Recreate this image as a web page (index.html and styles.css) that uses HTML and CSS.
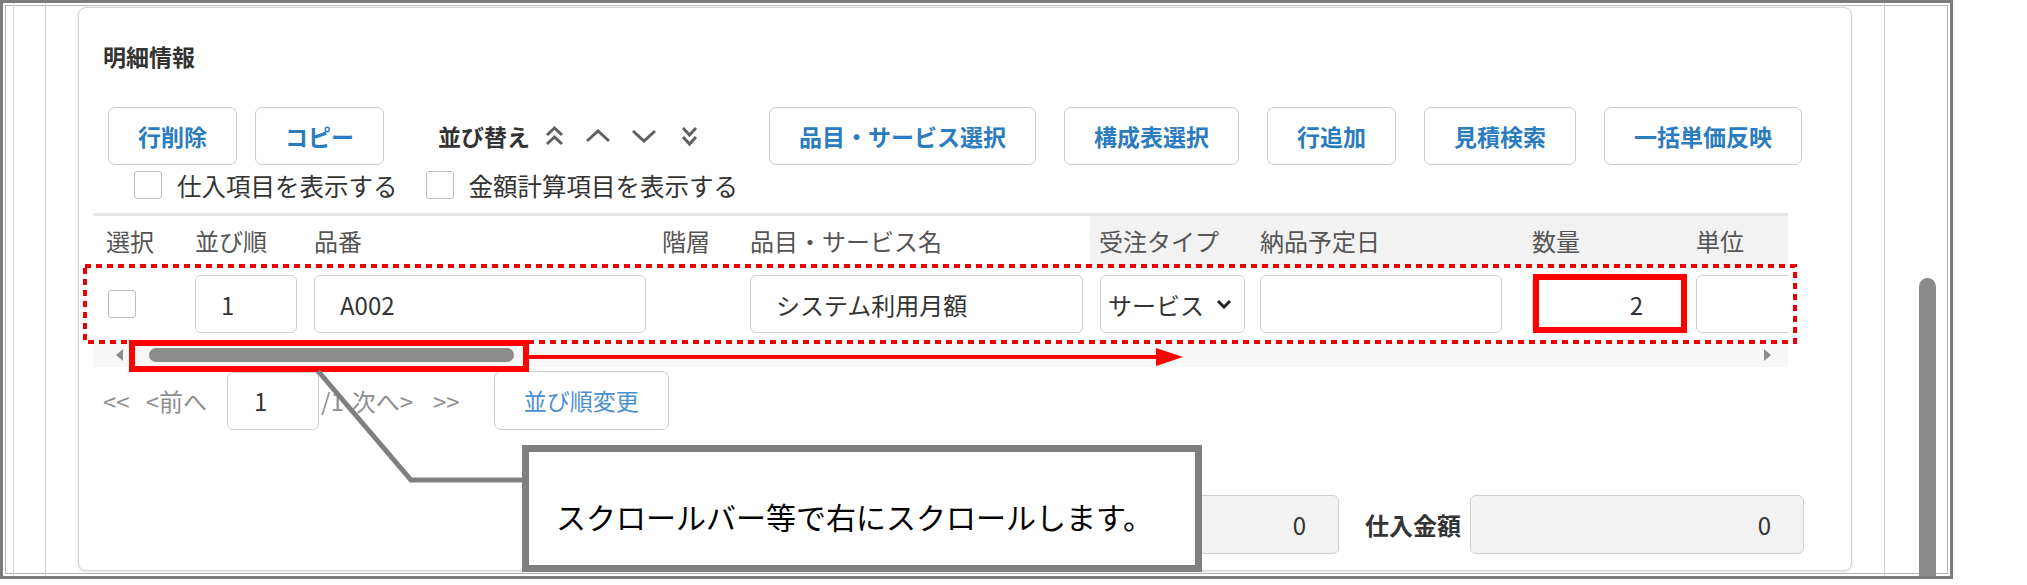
FILE: index.html
```html
<!DOCTYPE html>
<html lang="ja">
<head>
    <meta charset="UTF-8">
    <title>明細情報</title>
    <link rel="stylesheet" href="styles.css">
</head>
<body>
    <div class="frame">
        <div class="gutter"></div>

        <div class="main">
            <section class="card">
                <h2 class="card-title">明細情報</h2>

                <!-- toolbar -->
                <div class="toolbar">
                    <button type="button" class="btn btn-first">行削除</button>
                    <button type="button" class="btn">コピー</button>
                    <div class="sort">
                        <span class="sort-label">並び替え</span>
                        <svg class="ic-top" width="19" height="22" viewBox="0 0 19 22"><polyline points="2,10 9.5,3 17,10"/><polyline points="2,19 9.5,12 17,19"/></svg>
                        <svg class="ic-up" width="26" height="14" viewBox="0 0 26 14"><polyline points="2,12 13,2 24,12"/></svg>
                        <svg class="ic-down" width="26" height="14" viewBox="0 0 26 14"><polyline points="2,2 13,12 24,2"/></svg>
                        <svg class="ic-bottom" width="17" height="22" viewBox="0 0 17 22"><polyline points="2,3 8.5,10 15,3"/><polyline points="2,12 8.5,19 15,12"/></svg>
                    </div>
                    <button type="button" class="btn">品目・サービス選択</button>
                    <button type="button" class="btn">構成表選択</button>
                    <button type="button" class="btn">行追加</button>
                    <button type="button" class="btn">見積検索</button>
                    <button type="button" class="btn">一括単価反映</button>
                </div>

                <div class="toggles">
                    <label class="check"><span class="box"></span>仕入項目を表示する</label>
                    <label class="check"><span class="box"></span>金額計算項目を表示する</label>
                </div>

                <!-- detail lines -->
                <div class="grid-wrap">
                    <div class="grid">
                        <div class="th th-sel">選択</div>
                        <div class="th">並び順</div>
                        <div class="th">品番</div>
                        <div class="th">階層</div>
                        <div class="th">品目・サービス名</div>
                        <div class="th shade th-type">受注タイプ</div>
                        <div class="th shade">納品予定日</div>
                        <div class="th shade">数量</div>
                        <div class="th shade">単位</div>

                        <div class="td td-sel"><span class="box"></span></div>
                        <div class="td"><input class="field w-order" type="text" value="1"></div>
                        <div class="td"><input class="field w-code" type="text" value="A002"></div>
                        <div class="td"></div>
                        <div class="td"><input class="field w-name" type="text" value="システム利用月額"></div>
                        <div class="td td-type">
                            <div class="field select">
                                <span>サービス</span>
                                <svg width="16" height="10" viewBox="0 0 16 10"><polyline points="2,2 8,8 14,2"/></svg>
                            </div>
                        </div>
                        <div class="td"><input class="field w-date" type="text" value=""></div>
                        <div class="td"><input class="field w-qty num" type="text" value="2"></div>
                        <div class="td"><input class="field w-unit" type="text" value=""></div>
                    </div>
                    <div class="hscroll">
                        <span class="arrow-left"></span>
                        <span class="hthumb"></span>
                        <span class="arrow-right"></span>
                    </div>
                </div>

                <div class="pager">
                    <span class="pg-first">&lt;&lt;</span>
                    <span class="pg-prev">&lt;前へ</span>
                    <input class="field w-page" type="text" value="1">
                    <span class="pg-total">/1</span>
                    <span class="pg-next">次へ&gt;</span>
                    <span class="pg-last">&gt;&gt;</span>
                    <button type="button" class="btn btn-light">並び順変更</button>
                </div>

                <div class="totals">
                    <input class="total" type="text" value="0">
                    <span class="total-label">仕入金額</span>
                    <input class="total" type="text" value="0">
                </div>
            </section>
        </div>

        <div class="vscroll"><div class="vthumb"></div></div>

        <!-- annotations -->
        <svg class="marks" width="1956" height="582" viewBox="0 0 1956 582">
            <rect class="dotted" x="85" y="266" width="1710" height="76"/>
            <rect class="solid" x="1536" y="277" width="148" height="53"/>
            <rect class="solid" x="132" y="343" width="394" height="26"/>
            <line class="arrow-line" x1="529" y1="357" x2="1160" y2="357"/>
            <polygon class="arrow-head" points="1156,348 1183,357 1156,366"/>
            <polyline class="leader" points="318,371 411,480 524,480"/>
        </svg>
        <div class="callout">スクロールバー等で右にスクロールします。</div>
    </div>
</body>
</html>
```

FILE: styles.css
```css
* {
    box-sizing: border-box;
}
body {
    margin: 0;
    background: #fff;
    font-family: "Noto Sans CJK JP", "Noto Sans", sans-serif;
    color: #333;
}
.frame {
    position: relative;
    display: flex;
    width: 1953px;
    height: 579px;
    border: 3px solid #7c7c7c;
    box-shadow: inset 0 0 0 2px #fff, inset 0 0 0 3px #b4b4b4;
    overflow: hidden;
}
.gutter {
    flex: none;
    width: 33px;
    margin-left: 10px;
    border-left: 1px solid #d6d6d6;
    border-right: 1px solid #cfcfcf;
}
.main {
    flex: 1;
    padding: 4px 32px 0 32px;
}
.vscroll {
    flex: none;
    width: 66px;
    border-left: 1px solid #cfcfcf;
}
.vthumb {
    margin: 275px 0 0 34px;
    width: 17px;
    height: 320px;
    background: #8a8a8a;
    border-radius: 9px 9px 0 0;
}

/* card */
.card {
    height: 564px;
    padding: 31px 47px 16px 14px;
    border: 1px solid #d2d2d2;
    border-radius: 8px;
    box-shadow: 0 1px 3px rgba(0, 0, 0, 0.12);
    background: #fff;
}
.card-title {
    margin: 0 0 0 10px;
    font-size: 23px;
    line-height: 34px;
    font-weight: 700;
    color: #333;
}

/* toolbar */
.toolbar {
    display: flex;
    align-items: center;
    gap: 28px;
    height: 58px;
    margin: 34px 0 0 15px;
}
.btn {
    height: 58px;
    padding: 0 29px;
    border: 1px solid #cbcbcb;
    border-radius: 7px;
    background: #fff;
    color: #2b7bbf;
    font-family: inherit;
    font-size: 23px;
    font-weight: 700;
    line-height: 1;
    white-space: nowrap;
}
.btn-first {
    margin-right: -10px;
}
.btn-light {
    height: 59px;
    margin-left: 34px;
    font-weight: 400;
    color: #4a90d0;
}
.sort {
    display: flex;
    align-items: center;
    margin: 0 43px 0 26px;
}
.sort-label {
    font-size: 23px;
    font-weight: 700;
    color: #333;
}
.sort svg {
    fill: none;
    stroke: #5f5f5f;
    stroke-width: 3;
}
.ic-top {
    margin-left: 15px;
}
.ic-up {
    margin-left: 21px;
}
.ic-down {
    margin-left: 20px;
}
.ic-bottom {
    margin-left: 24px;
}

/* toggles */
.toggles {
    display: flex;
    align-items: center;
    height: 38px;
    margin: 1px 0 0 41px;
    font-size: 24.5px;
    color: #333;
}
.check {
    display: flex;
    align-items: center;
    gap: 15px;
    margin-right: 28px;
}
.box {
    display: inline-block;
    width: 28px;
    height: 28px;
    border: 1px solid #bdbdbd;
    border-radius: 3px;
    background: #fff;
}

/* grid */
.grid-wrap {
    width: 1695px;
    margin-top: 9px;
    border-top: 3px solid #e4e4e4;
    overflow: hidden;
}
.grid {
    display: grid;
    grid-template-columns: 100px 119px 348px 88px 342px 168px 272px 164px 200px;
    grid-template-rows: 49px 78px;
    width: 1801px;
}
.th {
    display: flex;
    align-items: center;
    padding-left: 2px;
    font-size: 24px;
    color: #555;
    white-space: nowrap;
}
.th-sel {
    padding-left: 13px;
}
.th-type {
    padding-left: 9px;
}
.shade {
    background: #f2f2f2;
}
.td {
    display: flex;
    align-items: center;
    padding-left: 2px;
}
.td-sel {
    padding-left: 15px;
}
.td-type {
    padding-left: 10px;
}
.field {
    height: 58px;
    padding: 0 0 0 25px;
    border: 1px solid #cfcfcf;
    border-radius: 6px;
    background: #fff;
    font-family: inherit;
    font-size: 24px;
    color: #333;
    outline: none;
}
.w-order { width: 102px; }
.w-code { width: 332px; }
.w-name { width: 333px; }
.w-date { width: 242px; }
.w-qty { width: 150px; }
.w-unit { width: 150px; }
.w-page {
    width: 92px;
    height: 58px;
    margin-left: 20px;
    padding-left: 26px;
}
.num {
    text-align: right;
    padding-right: 38px;
}
.select {
    display: flex;
    align-items: center;
    width: 145px;
    padding-left: 7px;
    color: #333;
}
.select svg {
    margin-left: 12px;
    fill: none;
    stroke: #222;
    stroke-width: 3;
}

/* horizontal scrollbar */
.hscroll {
    display: flex;
    align-items: center;
    height: 24px;
    padding: 0 17px 0 23px;
    background: #f7f7f7;
}
.arrow-left {
    width: 0;
    height: 0;
    border-top: 6px solid transparent;
    border-bottom: 6px solid transparent;
    border-right: 7px solid #8c8c8c;
}
.arrow-right {
    width: 0;
    height: 0;
    margin-left: auto;
    border-top: 6px solid transparent;
    border-bottom: 6px solid transparent;
    border-left: 7px solid #8c8c8c;
}
.hthumb {
    width: 365px;
    height: 14px;
    margin-left: 26px;
    border-radius: 7px;
    background: #8c8c8c;
}

/* pager */
.pager {
    display: flex;
    align-items: center;
    height: 59px;
    margin: 4px 0 0 10px;
    font-size: 24px;
    color: #8f8f8f;
    white-space: nowrap;
}
.pg-prev {
    margin-left: 16px;
}
.pg-total {
    margin-left: 2px;
}
.pg-next {
    margin-left: 8px;
}
.pg-last {
    margin-left: 20px;
}

/* totals */
.totals {
    display: flex;
    align-items: center;
    justify-content: flex-end;
    height: 59px;
    margin-top: 65px;
}
.total {
    width: 334px;
    height: 59px;
    padding: 0 32px 0 0;
    border: 1px solid #cfcfcf;
    border-radius: 6px;
    background: #f2f2f2;
    font-family: inherit;
    font-size: 24px;
    color: #333;
    text-align: right;
}
.total-label {
    margin: 0 9px 0 26px;
    font-size: 24px;
    font-weight: 700;
    color: #333;
}

/* annotations */
.marks {
    position: absolute;
    left: -3px;
    top: -3px;
    pointer-events: none;
}
.dotted {
    fill: none;
    stroke: #ee0000;
    stroke-width: 4;
    stroke-dasharray: 6 5;
}
.solid {
    fill: none;
    stroke: #ff0000;
    stroke-width: 6;
}
.arrow-line {
    stroke: #ff0000;
    stroke-width: 4;
}
.arrow-head {
    fill: #ff0000;
}
.leader {
    fill: none;
    stroke: #7f7f7f;
    stroke-width: 5;
}
.callout {
    position: absolute;
    left: 519px;
    top: 442px;
    width: 680px;
    height: 127px;
    padding: 14px 0 0 27px;
    display: flex;
    align-items: center;
    border: 7px solid #7f7f7f;
    background: #fff;
    font-size: 30px;
    color: #000;
    white-space: nowrap;
}
```
